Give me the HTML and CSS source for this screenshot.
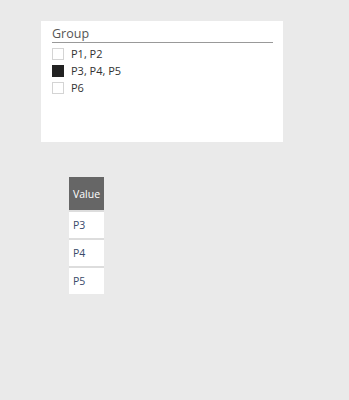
FILE: index.html
```html
<!DOCTYPE html>
<html lang="en">
<head>
  <meta charset="UTF-8">
  <title>Group slicer</title>
  <link rel="stylesheet" href="styles.css">
</head>
<body>

<div class="slicer">
  <div class="slicer-title">Group</div>
  <div class="slicer-item">
    <span class="check"></span>
    <span>P1, P2</span>
  </div>
  <div class="slicer-item">
    <span class="check checked"></span>
    <span>P3, P4, P5</span>
  </div>
  <div class="slicer-item">
    <span class="check"></span>
    <span>P6</span>
  </div>
</div>

<table class="values">
  <tr><th>Value</th></tr>
  <tr><td>P3</td></tr>
  <tr><td>P4</td></tr>
  <tr><td>P5</td></tr>
</table>

</body>
</html>
```

FILE: styles.css
```css
html, body {
  margin: 0;
  padding: 0;
}

body {
  background-color: #eaeaea;
  font-family: 'Open Sans', 'Noto Sans', sans-serif;
  padding: 21px 0 0 41px;
}

/* Slicer card */
.slicer {
  width: 221px;
  height: 111px;
  background-color: white;
  padding: 5px 10px 5px 11px;
}

.slicer-title {
  font-size: 12.5px;
  color: #555;
  line-height: 16px;
  border-bottom: 1px solid #999;
  margin-bottom: 2px;
}

.slicer-item {
  display: flex;
  align-items: center;
  height: 17px;
  font-size: 11px;
  color: #333;
}

.check {
  width: 10px;
  height: 10px;
  border: 1px solid #d4d4d4;
  margin-right: 7px;
  box-sizing: content-box;
}

.check.checked {
  background-color: #222;
  border-color: #222;
}

/* Value table */
.values {
  border-collapse: collapse;
  table-layout: fixed;
  margin: 35px 0 0 28px;
  width: 35px;
}

.values th {
  background-color: #666;
  color: white;
  font-weight: normal;
  font-size: 10.5px;
  text-align: left;
  height: 33px;
  padding: 0 4px;
}

.values td {
  background-color: white;
  color: #3a4a6a;
  font-size: 10.5px;
  height: 26px;
  padding: 0 4px;
  border-top: 2px solid #ddd;
}
```
